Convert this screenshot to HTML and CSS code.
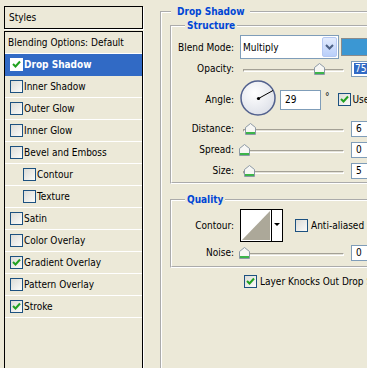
FILE: index.html
```html
<!DOCTYPE html>
<html lang="en">
<head>
    <meta charset="UTF-8">
    <title>Layer Style</title>
    <link rel="stylesheet" href="styles.css">
</head>
<body>
    <div class="dialog">
        <div class="styles-pane">
            <div class="styles-head">Styles</div>
            <ul class="style-list">
                <li class="item plain">Blending Options: Default</li>
                <li class="item selected"><span class="cb"><svg width="11" height="11" viewBox="0 0 11 11"><polyline points="2,5 4.5,7.5 9,2.5" fill="none" stroke="#21a121" stroke-width="2"/></svg></span>Drop Shadow</li>
                <li class="item"><span class="cb"></span>Inner Shadow</li>
                <li class="item"><span class="cb"></span>Outer Glow</li>
                <li class="item"><span class="cb"></span>Inner Glow</li>
                <li class="item"><span class="cb"></span>Bevel and Emboss</li>
                <li class="item sub"><span class="cb"></span>Contour</li>
                <li class="item sub"><span class="cb"></span>Texture</li>
                <li class="item"><span class="cb"></span>Satin</li>
                <li class="item"><span class="cb"></span>Color Overlay</li>
                <li class="item"><span class="cb"><svg width="11" height="11" viewBox="0 0 11 11"><polyline points="2,5 4.5,7.5 9,2.5" fill="none" stroke="#21a121" stroke-width="2"/></svg></span>Gradient Overlay</li>
                <li class="item"><span class="cb"></span>Pattern Overlay</li>
                <li class="item"><span class="cb"><svg width="11" height="11" viewBox="0 0 11 11"><polyline points="2,5 4.5,7.5 9,2.5" fill="none" stroke="#21a121" stroke-width="2"/></svg></span>Stroke</li>
            </ul>
        </div>

        <div class="settings">
            <fieldset class="group outer">
                <legend>Drop Shadow</legend>

                <fieldset class="group inner structure">
                    <legend>Structure</legend>
                    <div class="row row-blend">
                        <span class="lbl">Blend Mode:</span>
                        <div class="select">
                            <span>Multiply</span>
                            <span class="drop-btn"><svg width="9" height="6" viewBox="0 0 9 6"><polyline points="1,1 4.5,4.5 8,1" fill="none" stroke="#4d6185" stroke-width="2"/></svg></span>
                        </div>
                        <span class="swatch"></span>
                    </div>
                    <div class="row row-opacity">
                        <span class="lbl">Opacity:</span>
                        <div class="slider">
                            <span class="track"></span>
                            <span class="thumb" style="left: 74px"><svg width="11" height="12" viewBox="0 0 11 12"><path d="M0.5 11.5V4.5L5.5 0.5L10.5 4.5V11.5Z" fill="#f7f7f4" stroke="#8c99a6"/><path d="M1 9.5H10M1 10.5H10" stroke="#3cb44a"/></svg></span>
                        </div>
                        <span class="num"><span class="sel">75</span></span>
                    </div>
                    <div class="row row-angle">
                        <span class="lbl lbl-angle">Angle:</span>
                        <svg class="dial" width="36" height="36" viewBox="0 0 36 36">
                            <defs>
                                <radialGradient id="dialfill" cx="40%" cy="35%" r="70%">
                                    <stop offset="0" stop-color="#ffffff"/>
                                    <stop offset="1" stop-color="#dde0e8"/>
                                </radialGradient>
                            </defs>
                            <circle cx="18" cy="18" r="17" fill="url(#dialfill)" stroke="#52618e" stroke-width="1.5"/>
                            <line x1="18.5" y1="18.5" x2="33" y2="10.5" stroke="#000" stroke-width="1"/>
                            <circle cx="18.5" cy="18.5" r="1.6" fill="#000"/>
                        </svg>
                        <span class="num num-angle">29</span>
                        <span class="deg">°</span>
                        <span class="cb cb-use"><svg width="11" height="11" viewBox="0 0 11 11"><polyline points="2,5 4.5,7.5 9,2.5" fill="none" stroke="#21a121" stroke-width="2"/></svg></span>
                        <span class="use-text">Use Global Light</span>
                    </div>
                    <div class="row row-slider">
                        <span class="lbl">Distance:</span>
                        <div class="slider">
                            <span class="track"></span>
                            <span class="thumb" style="left: 5px"><svg width="11" height="12" viewBox="0 0 11 12"><path d="M0.5 11.5V4.5L5.5 0.5L10.5 4.5V11.5Z" fill="#f7f7f4" stroke="#8c99a6"/><path d="M1 9.5H10M1 10.5H10" stroke="#3cb44a"/></svg></span>
                        </div>
                        <span class="num">6</span>
                    </div>
                    <div class="row row-slider">
                        <span class="lbl">Spread:</span>
                        <div class="slider">
                            <span class="track"></span>
                            <span class="thumb" style="left: -1px"><svg width="11" height="12" viewBox="0 0 11 12"><path d="M0.5 11.5V4.5L5.5 0.5L10.5 4.5V11.5Z" fill="#f7f7f4" stroke="#8c99a6"/><path d="M1 9.5H10M1 10.5H10" stroke="#3cb44a"/></svg></span>
                        </div>
                        <span class="num">0</span>
                    </div>
                    <div class="row row-slider">
                        <span class="lbl">Size:</span>
                        <div class="slider">
                            <span class="track"></span>
                            <span class="thumb" style="left: 4px"><svg width="11" height="12" viewBox="0 0 11 12"><path d="M0.5 11.5V4.5L5.5 0.5L10.5 4.5V11.5Z" fill="#f7f7f4" stroke="#8c99a6"/><path d="M1 9.5H10M1 10.5H10" stroke="#3cb44a"/></svg></span>
                        </div>
                        <span class="num">5</span>
                    </div>
                </fieldset>

                <fieldset class="group inner quality">
                    <legend>Quality</legend>
                    <div class="row row-contour">
                        <span class="lbl">Contour:</span>
                        <svg class="contour" width="43" height="33" viewBox="0 0 43 33">
                            <rect x="0.5" y="0.5" width="42" height="32" fill="#fff" stroke="#000"/>
                            <path d="M2 31L30 2V31Z" fill="#aca899"/>
                            <line x1="31.5" y1="0" x2="31.5" y2="33" stroke="#000"/>
                            <path d="M34 14H40L37 17Z" fill="#000"/>
                        </svg>
                        <span class="cb cb-anti"></span>
                        <span class="check-text">Anti-aliased</span>
                    </div>
                    <div class="row row-slider">
                        <span class="lbl">Noise:</span>
                        <div class="slider">
                            <span class="track"></span>
                            <span class="thumb" style="left: -1px"><svg width="11" height="12" viewBox="0 0 11 12"><path d="M0.5 11.5V4.5L5.5 0.5L10.5 4.5V11.5Z" fill="#f7f7f4" stroke="#8c99a6"/><path d="M1 9.5H10M1 10.5H10" stroke="#3cb44a"/></svg></span>
                        </div>
                        <span class="num">0</span>
                    </div>
                </fieldset>

                <div class="knock">
                    <span class="cb"><svg width="11" height="11" viewBox="0 0 11 11"><polyline points="2,5 4.5,7.5 9,2.5" fill="none" stroke="#21a121" stroke-width="2"/></svg></span>
                    <span class="check-text">Layer Knocks Out Drop Shadow</span>
                </div>
            </fieldset>
        </div>
    </div>
</body>
</html>
```

FILE: styles.css
```css
body {
    margin: 0;
    background: #ece9d8;
    font-family: "DejaVu Sans Condensed", "DejaVu Sans", sans-serif;
    font-stretch: condensed;
    font-size: 10px;
    color: #000;
    overflow: hidden;
}
.dialog {
    display: flex;
    width: 367px;
    height: 368px;
    overflow: hidden;
}

/* left list of effects */
.styles-pane {
    width: 139px;
    margin: 6px 0 0 4px;
    display: flex;
    flex-direction: column;
    flex-shrink: 0;
}
.styles-head {
    height: 21px;
    line-height: 21px;
    border: 1px solid #000;
    padding-left: 4px;
    box-shadow: 1px 1px 0 #fff;
}
.style-list {
    list-style: none;
    margin: 2px 0 0;
    padding: 0;
    border: 1px solid #000;
    border-bottom: 0;
    flex: 1;
    box-shadow: 1px 0 0 #fff;
}
.item {
    height: 21px;
    border-bottom: 1px solid #fff;
    display: flex;
    align-items: center;
    padding-left: 5px;
    white-space: nowrap;
}
.item.plain {
    padding-left: 3px;
}
.item.sub {
    padding-left: 18px;
}
.item.selected {
    background: #316ac5;
    border-bottom-color: #316ac5;
    color: #fff;
    font-weight: bold;
}
.cb {
    width: 11px;
    height: 11px;
    border: 1px solid #1c5180;
    background: linear-gradient(135deg, #dcdcd7, #fbfbf9);
    flex-shrink: 0;
    margin-right: 1px;
    display: flex;
}
.item.selected .cb {
    border-color: #fff;
    background: #fff;
}

/* right settings */
.settings {
    padding: 5px 0 0 17px;
    width: 240px;
    flex-shrink: 0;
}
.group {
    border: 2px groove #fff;
    margin: 0;
    padding: 0;
    min-width: 0;
}
.group legend {
    color: #0046d5;
    font-weight: bold;
    line-height: 14px;
    padding: 0 2px;
    margin-left: 13px;
}
.outer {
    padding: 0 0 200px 8px;
}
.outer > legend {
    padding: 0 5px 0 6px;
    margin-left: 1px;
}
.structure {
    padding: 2px 0 1px;
}
.quality {
    margin-top: 9px;
    padding: 2px 0 3px;
}
.row {
    display: flex;
    align-items: center;
    white-space: nowrap;
}
.lbl {
    width: 62px;
    margin-right: 6px;
    text-align: right;
    flex-shrink: 0;
}
.row-blend {
    height: 24px;
}
.select {
    width: 97px;
    height: 22px;
    border: 1px solid #7f9db9;
    background: #fff;
    display: flex;
    align-items: center;
    padding-left: 2px;
    box-sizing: content-box;
    width: 95px;
    flex-shrink: 0;
}
.drop-btn {
    margin-left: auto;
    margin-right: 1px;
    width: 15px;
    height: 20px;
    border: 1px solid #b5c8f2;
    border-radius: 2px;
    box-sizing: border-box;
    background: linear-gradient(#e3ebfd, #b9cffa);
    display: flex;
    align-items: center;
    justify-content: center;
}
.swatch {
    margin-left: 2px;
    width: 40px;
    height: 16px;
    border: 1px solid #8b8b8b;
    background: #3b97d3;
    flex-shrink: 0;
}
.row-opacity {
    height: 17px;
    margin-top: 1px;
}
.slider {
    position: relative;
    width: 111px;
    height: 12px;
    flex-shrink: 0;
}
.track {
    position: absolute;
    left: 3px;
    top: 6px;
    width: 99px;
    height: 1px;
    border: 1px solid;
    border-color: #a4a196 #fff #fff #a4a196;
    background: #e4e2d8;
}
.thumb {
    position: absolute;
    top: 0;
    width: 11px;
    height: 12px;
    display: flex;
}
.num {
    width: 30px;
    height: 14px;
    line-height: 14px;
    border: 1px solid #7f9db9;
    background: #fff;
    padding-left: 4px;
    flex-shrink: 0;
}
.sel {
    background: #316ac5;
    color: #fff;
    margin-left: -2px;
    padding: 0 1px;
}
.row-angle {
    height: 36px;
    margin-top: 3px;
    align-items: flex-start;
}
.lbl-angle {
    margin-top: 14px;
}
.dial {
    margin-right: 4px;
    flex-shrink: 0;
}
.num-angle {
    width: 35px;
    height: 18px;
    line-height: 18px;
    margin-top: 10px;
}
.deg {
    margin: 11px 0 0 4px;
}
.cb-use {
    margin: 13px 1px 0 8px;
}
.use-text {
    margin: 14px 0 0 1px;
}
.row-slider {
    height: 21px;
}
.row-slider:first-of-type {
    margin-top: 2px;
}
.structure .row-angle + .row-slider {
    margin-top: 2px;
}
.row-contour {
    height: 33px;
}
.contour {
    flex-shrink: 0;
}
.cb-anti {
    margin-left: 12px;
}
.check-text {
    margin-left: 2px;
}
.knock {
    display: flex;
    align-items: center;
    margin: 7px 0 0 74px;
    white-space: nowrap;
}
```
